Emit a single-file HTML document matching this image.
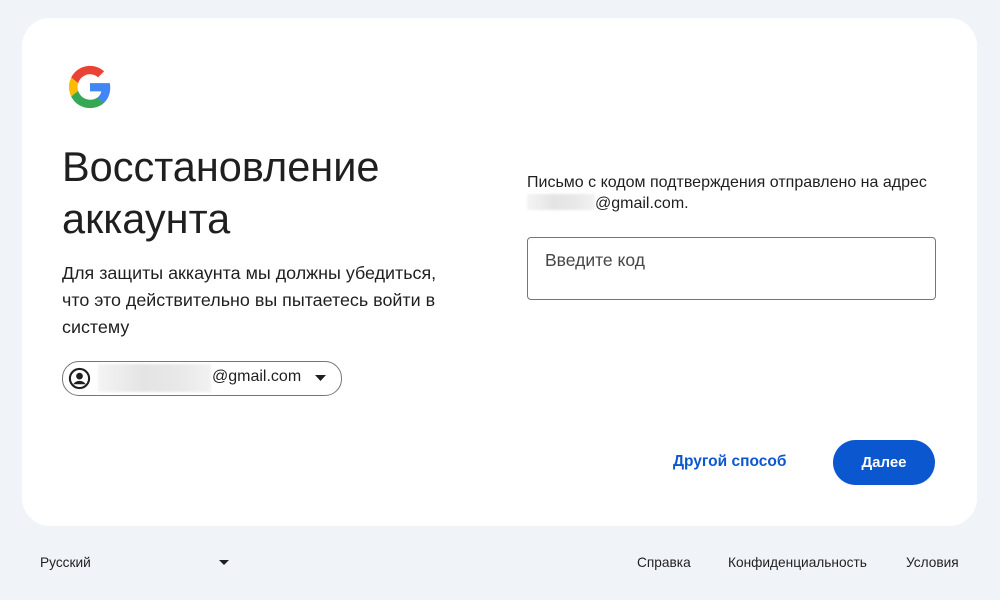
<!DOCTYPE html>
<html><head><meta charset="utf-8"><style>
body{margin:0;width:1000px;height:600px;background:#f0f4f9;font-family:"Liberation Sans",Arial,sans-serif;color:#1f1f1f;position:relative;overflow:hidden}
.card{position:absolute;left:22px;top:18px;width:955px;height:508px;background:#fff;border-radius:28px}
.a{position:absolute}
h1{position:absolute;left:62px;top:141px;margin:0;font-weight:400;font-size:41.5px;line-height:52px;color:#1f1f1f;white-space:nowrap}
.p{left:62px;top:260px;font-size:17.9px;line-height:27px;white-space:nowrap}
.chip{left:62px;top:361px;width:278px;height:33px;border:1px solid #747775;border-radius:17px}
.blur{background:linear-gradient(90deg,#f4f4f4,#e4e4e4 40%,#e8e8e8 70%,#f2f2f2);filter:blur(1px)}
.input{left:527px;top:237px;width:407px;height:61px;border:1px solid #747775;border-radius:4px}
.btn{left:833px;top:440px;width:102px;height:45px;background:#0b57d0;border-radius:23px;color:#fff;font-weight:bold;font-size:15px;text-align:center;line-height:45px}
.f{top:555px;font-size:13.7px;color:#1f1f1f}
</style></head><body>
<div class="card"></div>
<svg class="a" style="left:67px;top:64px" width="46" height="46" viewBox="0 0 48 48">
<path fill="#4285F4" d="M45.1 24.5c0-1.6-.1-3.1-.4-4.5H24v8.5h11.8c-.5 2.8-2.1 5.1-4.4 6.7v5.5h7.1c4.2-3.900 6.6-9.6 6.6-16.2z"/>
<path fill="#34A853" d="M24 46c5.9 0 10.9-2 14.5-5.3l-7.1-5.5c-2 1.3-4.5 2.1-7.4 2.1-5.7 0-10.6-3.9-12.3-9.1H4.4v5.7C8 41.1 15.4 46 24 46z"/>
<path fill="#FBBC05" d="M11.700 28.2c-.4-1.3-.7-2.7-.7-4.2s.3-2.9.7-4.2v-5.7H4.4C2.9 17.1 2 20.4 2 24s.9 6.9 2.4 9.9l7.3-5.7z"/>
<path fill="#EA4335" d="M24 10.7c3.2 0 6.1 1.1 8.4 3.3l6.3-6.3C34.9 4.2 29.9 2 24 2 15.4 2 8 6.9 4.4 14.1l7.3 5.7c1.7-5.2 6.6-9.1 12.3-9.1z"/>
</svg>
<h1>Восстановление<br>аккаунта</h1>
<div class="a p">Для защиты аккаунта мы должны убедиться,<br>что это действительно вы пытаетесь войти в<br>систему</div>
<div class="a chip"></div>
<svg class="a" style="left:68px;top:367px" width="23" height="23" viewBox="0 0 24 24"><circle cx="12" cy="12" r="10" fill="none" stroke="#1f1f1f" stroke-width="2.2"/><circle cx="12" cy="9.5" r="3.5" fill="#1f1f1f"/><path d="M5.5 18c1.5-2.5 4-3.500 6.5-3.5s5 1 6.5 3.5" fill="#1f1f1f"/></svg>
<div class="a blur" style="left:98px;top:364px;width:113px;height:28px"></div>
<div class="a" style="left:212px;top:368px;font-size:16px">@gmail.com</div>
<svg class="a" style="left:315px;top:375px" width="11" height="6"><path d="M0 0h11L5.5 6z" fill="#1f1f1f"/></svg>
<div class="a" style="left:527px;top:172px;font-size:16px;line-height:21px;white-space:nowrap">Письмо с кодом подтверждения отправлено на адрес<br><span class="blur" style="display:inline-block;width:68px;height:16px;vertical-align:-2px"></span>@gmail.com.</div>
<div class="a input"></div>
<div class="a" style="left:545px;top:250px;font-size:17.5px;color:#444746">Введите код</div>
<div class="a" style="left:673px;top:453px;font-size:15.5px;font-weight:bold;color:#0b57d0">Другой способ</div>
<div class="a btn">Далее</div>
<div class="a f" style="left:40px">Русский</div>
<svg class="a" style="left:219px;top:560px" width="10" height="5"><path d="M0 0h10L5 5z" fill="#1f1f1f"/></svg>
<div class="a f" style="left:637px">Справка</div>
<div class="a f" style="left:728px">Конфиденциальность</div>
<div class="a f" style="left:906px">Условия</div>
</body></html>
